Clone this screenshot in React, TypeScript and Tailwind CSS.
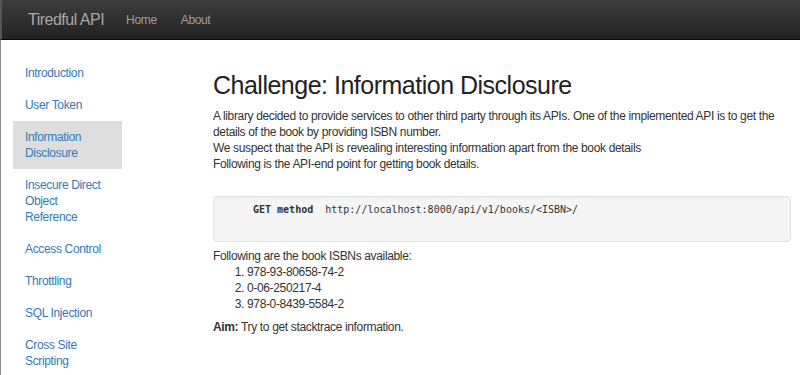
import React from "react";

const links: { label: React.ReactNode; active?: boolean }[] = [
  { label: "Introduction" },
  { label: "User Token" },
  { label: <>Information<br />Disclosure</>, active: true },
  { label: <>Insecure Direct<br />Object<br />Reference</> },
  { label: "Access Control" },
  { label: "Throttling" },
  { label: "SQL Injection" },
  { label: <>Cross Site<br />Scripting</> },
];

const isbns = ["978-93-80658-74-2", "0-06-250217-4", "978-0-8439-5584-2"];

export default function App() {
  return (
    <div className="w-[800px] h-[375px] overflow-hidden bg-white text-[12px] tracking-[-0.35px] leading-4 text-[#333] font-['Liberation_Sans',Arial,sans-serif]">
      {/* navbar */}
      <div className="h-10 flex items-center bg-gradient-to-b from-[#3d3d3d] to-[#222] border-b border-[#080808] border-l-2 border-l-[#555]">
        <span className="ml-[26px] text-[16px] tracking-[-0.5px] text-[#a8a8a8]">Tiredful API</span>
        <a className="ml-[22px] text-[#9d9d9d]">Home</a>
        <a className="ml-[24px] text-[#9d9d9d]">About</a>
      </div>

      <div className="flex h-[335px] border-l border-[#8a8a8a]">
        {/* sidebar */}
        <ul className="w-[109px] ml-3 mt-[17px] shrink-0">
          {links.map((l, i) => (
            <li
              key={i}
              className={`px-3 py-2 text-[#337ab7] ${l.active ? "bg-[#dedede]" : ""}`}
            >
              {l.label}
            </li>
          ))}
        </ul>

        {/* content */}
        <div className="ml-[91px] mr-[9px] flex-1">
          <h1 className="mt-[29px] text-[25px] tracking-[-0.5px] leading-8 text-[#222]">Challenge: Information Disclosure</h1>
          <p className="mt-[7px]">
            A library decided to provide services to other third party through its APIs. One of the implemented API is to get the details of the book by providing ISBN number.
            <br />
            We suspect that the API is revealing interesting information apart from the book details
            <br />
            Following is the API-end point for getting book details.
          </p>
          <div className="mt-[24px] h-[46px] rounded bg-[#f5f5f5] border border-[#e3e3e3] shadow-[inset_0_1px_1px_rgba(0,0,0,0.05)] pl-[39px] pt-[5px] font-['DejaVu_Sans_Mono',monospace] text-[10px] tracking-normal whitespace-pre">
            <span className="font-bold">GET method</span>
            {"  http://localhost:8000/api/v1/books/<ISBN>/"}
          </div>
          <p className="mt-[6px]">Following are the book ISBNs available:</p>
          <ol className="list-decimal pl-[34px]">
            {isbns.map((i) => (
              <li key={i}>{i}</li>
            ))}
          </ol>
          <p className="mt-[7px]">
            <b>Aim:</b> Try to get stacktrace information.
          </p>
        </div>
      </div>
    </div>
  );
}
